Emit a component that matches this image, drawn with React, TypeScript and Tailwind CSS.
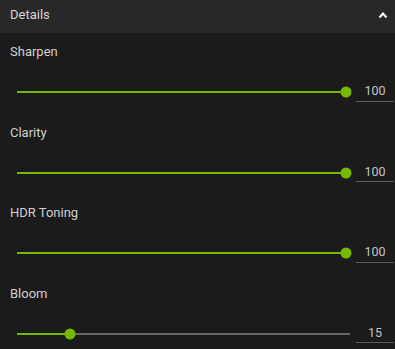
import React from "react";

interface SliderRowProps {
  label: string;
  value: number;
}

const TRACK_W = 333;
const INSET = 4;

const SliderRow: React.FC<SliderRowProps> = ({ label, value }) => {
  const pct = value / 100;
  const thumbX = INSET + pct * (TRACK_W - INSET * 2);

  return (
    <div className="h-[80.5px] flex flex-col">
      <div className="pl-[10px] pt-[11px] text-[13px] leading-[16px] text-[#cfcfcf]">
        {label}
      </div>
      <div className="mt-[22px] h-[20px] flex items-center pl-[17px]">
        <div className="relative h-[20px] w-[333px]">
          {/* track */}
          <div className="absolute left-0 right-0 top-1/2 -translate-y-1/2 h-[2px] bg-[#666666]" />
          <div
            className="absolute left-0 top-1/2 -translate-y-1/2 h-[2px] bg-[#76b900]"
            style={{ width: thumbX }}
          />
          {/* thumb */}
          <div
            className="absolute top-1/2 -translate-y-1/2 -translate-x-1/2 w-[11px] h-[11px] rounded-full bg-[#76b900]"
            style={{ left: thumbX }}
          />
        </div>
        <div className="ml-[6px] w-[38px] h-[19px] flex items-center justify-center border-b border-[#5c5c5c] text-[12.5px] text-[#c4c4c4]">
          {value}
        </div>
      </div>
    </div>
  );
};

export default function App() {
  return (
    <div className="w-[395px] h-[349px] overflow-hidden bg-[#1b1b1b] font-['Roboto',sans-serif]">
      {/* Header */}
      <div className="h-[33px] bg-[#282828] flex items-center justify-between pl-[10px] pr-[7px] pb-[3px]">
        <span className="text-[13px] text-[#d6d6d6]">Details</span>
        <svg width="10" height="8" viewBox="0 0 10 8">
          <polyline
            points="1.5,6.5 5,2.5 8.5,6.5"
            fill="none"
            stroke="#ffffff"
            strokeWidth="2"
          />
        </svg>
      </div>

      <SliderRow label="Sharpen" value={100} />
      <SliderRow label="Clarity" value={100} />
      <SliderRow label="HDR Toning" value={100} />
      <SliderRow label="Bloom" value={15} />
    </div>
  );
}
